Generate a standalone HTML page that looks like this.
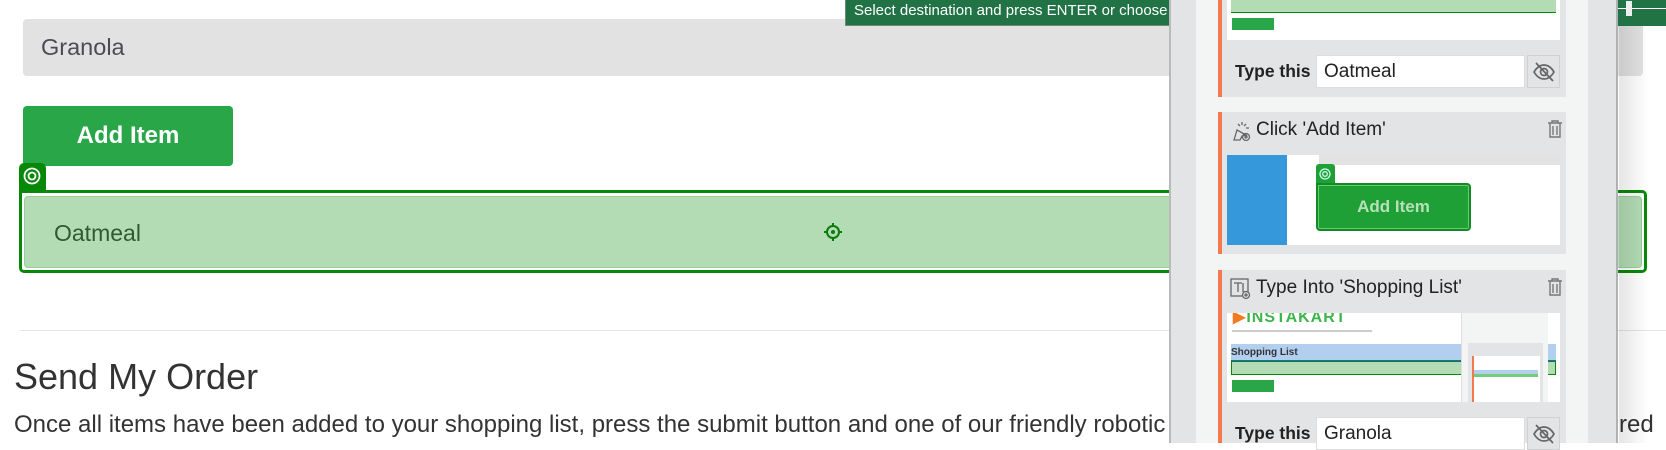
<!DOCTYPE html>
<html><head><meta charset="utf-8"><style>
*{margin:0;padding:0;box-sizing:border-box}
body{width:1666px;height:443px;overflow:hidden;background:#fff;font-family:"Liberation Sans",Arial,sans-serif;position:relative}
.a{position:absolute}
.ui{font-family:"Liberation Sans",Arial,sans-serif}
</style></head><body>
<!-- main page -->
<div class="a" style="left:23px;top:19px;width:1620px;height:57px;background:#e2e2e2;border-radius:4px"></div>
<div class="a" style="left:41px;top:34px;font-size:23.5px;color:#4b4b55">Granola</div>
<div class="a" style="left:23px;top:106px;width:210px;height:60px;background:#29a748;border-radius:4px;color:#fff;font-weight:bold;font-size:24px;line-height:60px;text-align:center">Add Item</div>
<div class="a" style="left:19px;top:163px;width:27px;height:30px;background:#088808;border-radius:5px 5px 0 0"></div>
<svg class="a" style="left:22px;top:166px" width="20" height="20" viewBox="0 0 20 20"><circle cx="10" cy="10" r="7.5" fill="none" stroke="#fff" stroke-width="1.8"/><circle cx="10" cy="10" r="3.5" fill="none" stroke="#fff" stroke-width="1.8"/></svg>
<div class="a" style="left:19px;top:190px;width:1628px;height:83px;border:3px solid #088808;border-radius:0 5px 5px 5px;background:#fff"></div>
<div class="a" style="left:24px;top:196px;width:1618px;height:72px;background:#b3dcb4;border:1px solid #9ccb9d;border-radius:4px"></div>
<div class="a" style="left:54px;top:220px;font-size:23px;color:#2f5a2f">Oatmeal</div>
<svg class="a" style="left:823px;top:222px" width="20" height="20" viewBox="0 0 20 20"><circle cx="10" cy="10" r="6" fill="none" stroke="#0a7a0a" stroke-width="2"/><circle cx="10" cy="10" r="2" fill="#0a7a0a"/><path d="M10 1v4M10 15v4M1 10h3M16 10h3" stroke="#0a7a0a" stroke-width="2"/></svg>
<div class="a" style="left:20px;top:330px;width:1646px;height:1px;background:#e5e5e5"></div>
<div class="a" style="left:14px;top:356px;font-size:36px;color:#333">Send My Order</div>
<div class="a" style="left:14px;top:411px;font-size:24px;color:#333;white-space:nowrap">Once all items have been added to your shopping list, press the submit button and one of our friendly robotic</div>
<div class="a" style="left:1619px;top:411px;font-size:24px;color:#333">red</div>
<!-- banner -->
<div class="a ui" style="left:845px;top:0;width:330px;height:26px;background:#217346;border:1px solid #6a8a75;border-top:none;color:#fff;font-size:15px;line-height:22px;padding-left:8px;white-space:nowrap;overflow:hidden">Select destination and press ENTER or choose</div>
<div class="a" style="left:1618px;top:0;width:48px;height:26px;background:#217346"></div>
<div class="a" style="left:1618px;top:8px;width:48px;height:1px;background:#fff"></div>
<div class="a" style="left:1626px;top:1px;width:6px;height:15px;background:#eee"></div>
<div class="a" style="left:1619px;top:26px;width:30px;height:417px;background:linear-gradient(90deg,rgba(0,0,0,.1),rgba(0,0,0,0))"></div>
<!-- panel -->
<div class="a" style="left:1169px;top:0;width:449px;height:443px;background:#e3e4e5;border-left:2px solid #b9babb;border-right:2px solid #b0b1b2"></div>
<div class="a" style="left:1196px;top:0;width:392px;height:443px;background:#f3f4f4"></div>

<!-- card 1 -->
<div class="a" style="left:1218px;top:0;width:348px;height:97px;background:#e3e4e5;border-left:4px solid #f47a4e"></div>
<div class="a" style="left:1227px;top:0;width:333px;height:40px;background:#fff"></div>
<div class="a" style="left:1231px;top:0;width:325px;height:13px;background:#b3dcb4;border-bottom:1px solid #088808"></div>
<div class="a" style="left:1232px;top:18px;width:42px;height:12px;background:#29a748"></div>
<div class="a ui" style="left:1235px;top:55px;font-size:17.5px;font-weight:bold;color:#222;line-height:33px">Type this</div>
<div class="a ui" style="left:1316px;top:55px;width:209px;height:33px;background:#fff;border:1px solid #ddd;font-size:19px;line-height:31px;padding-left:7px;color:#222">Oatmeal</div>
<div class="a" style="left:1527px;top:55px;width:33px;height:33px;background:#e3e4e5;border:1px solid #d0d1d2"></div>
<svg class="a" style="left:1532px;top:60px" width="24" height="24" viewBox="0 0 24 24"><path d="M2 12c3-5 6-7 10-7s7 2 10 7c-3 5-6 7-10 7s-7-2-10-7z" fill="none" stroke="#666" stroke-width="1.7"/><circle cx="12" cy="12" r="3.5" fill="none" stroke="#666" stroke-width="1.7"/><path d="M4 3l17 18" stroke="#666" stroke-width="1.7"/></svg>

<!-- card 2 -->
<div class="a" style="left:1218px;top:112px;width:348px;height:142px;background:#e3e4e5;border-left:4px solid #f47a4e"></div>
<svg class="a" style="left:1230px;top:120px" width="22" height="22" viewBox="0 0 22 22" fill="none" stroke="#666" stroke-width="1.3"><path d="M4 20l3-10 9 5-4 1-2 4z"/><path d="M12 2v3M16 4l-2 2M19 8h-3M8 4l2 2"/><circle cx="16" cy="17" r="3.5"/><circle cx="16" cy="17" r="1"/></svg>
<div class="a ui" style="left:1256px;top:119px;font-size:19px;color:#222">Click 'Add Item'</div>
<svg class="a" style="left:1547px;top:120px" width="16" height="18" viewBox="0 0 16 18" fill="none" stroke="#777" stroke-width="1.4"><path d="M1 3h14M5 3V1h6v2M3 3v14h10V3M6 6v9M10 6v9"/></svg>
<div class="a" style="left:1227px;top:155px;width:333px;height:90px;background:#fff"></div>
<div class="a" style="left:1319px;top:155px;width:241px;height:10px;background:#e2e2e2"></div>
<div class="a" style="left:1227px;top:155px;width:60px;height:90px;background:#3498db"></div>
<div class="a" style="left:1316px;top:164px;width:19px;height:20px;background:#1fa037;border-radius:3px 3px 0 0"></div>
<svg class="a" style="left:1318px;top:167px" width="14" height="14" viewBox="0 0 14 14"><circle cx="7" cy="7" r="5" fill="none" stroke="#cfe" stroke-width="1.3"/><circle cx="7" cy="7" r="2.3" fill="none" stroke="#cfe" stroke-width="1.3"/></svg>
<div class="a" style="left:1316px;top:183px;width:155px;height:48px;background:#1fa037;border:2px solid #138a28;border-radius:0 4px 4px 4px;box-shadow:inset 0 0 0 1px #6c6"></div>
<div class="a" style="left:1316px;top:183px;width:155px;height:48px;color:#b8e0b8;font-weight:bold;font-size:17px;line-height:48px;text-align:center">Add Item</div>

<!-- card 3 -->
<div class="a" style="left:1218px;top:270px;width:348px;height:173px;background:#e3e4e5;border-left:4px solid #f47a4e"></div>
<svg class="a" style="left:1230px;top:278px" width="22" height="22" viewBox="0 0 22 22" fill="none" stroke="#666" stroke-width="1.3"><rect x="1" y="1" width="17" height="17"/><path d="M4 5h8M8 5v9M13 5v9"/><circle cx="16" cy="17" r="3.5" fill="#e3e4e5"/><circle cx="16" cy="17" r="1"/></svg>
<div class="a ui" style="left:1256px;top:277px;font-size:19px;color:#222">Type Into 'Shopping List'</div>
<svg class="a" style="left:1547px;top:278px" width="16" height="18" viewBox="0 0 16 18" fill="none" stroke="#777" stroke-width="1.4"><path d="M1 3h14M5 3V1h6v2M3 3v14h10V3M6 6v9M10 6v9"/></svg>
<div class="a" style="left:1227px;top:313px;width:333px;height:89px;background:#fff;overflow:hidden">
 <div class="a" style="left:6px;top:-6px;font-size:16px;font-weight:bold;color:#3cb54a;letter-spacing:1px"><span style="color:#f47a20">▶</span>INSTAKART</div>
 <div class="a" style="left:5px;top:17px;width:140px;height:2px;background:#ccc"></div>
 <div class="a" style="left:4px;top:31px;width:325px;height:17px;background:#b3cff0;border-bottom:1px solid #2266cc;font-size:10px;font-weight:bold;color:#333;line-height:17px">Shopping List</div>
 <div class="a" style="left:4px;top:48px;width:325px;height:14px;background:#b3dcb4;border:1px solid #088808"></div>
 <div class="a" style="left:5px;top:67px;width:42px;height:12px;background:#29a748"></div>
 <div class="a" style="left:234px;top:0;width:87px;height:89px;background:#f3f4f4;border-left:1px solid #ddd"></div>
 <div class="a" style="left:241px;top:30px;width:75px;height:59px;background:#e3e4e5"></div>
 <div class="a" style="left:245px;top:43px;width:68px;height:46px;background:#fff;border-left:2px solid #f47a4e"></div>
 <div class="a" style="left:247px;top:57px;width:64px;height:4px;background:#b3cff0"></div>
 <div class="a" style="left:247px;top:61px;width:64px;height:3px;background:#7c7"></div>
</div>
<div class="a ui" style="left:1235px;top:417px;font-size:17.5px;font-weight:bold;color:#222;line-height:33px">Type this</div>
<div class="a ui" style="left:1316px;top:417px;width:209px;height:33px;background:#fff;border:1px solid #ddd;font-size:19px;line-height:31px;padding-left:7px;color:#222">Granola</div>
<div class="a" style="left:1527px;top:417px;width:33px;height:33px;background:#e3e4e5;border:1px solid #d0d1d2"></div>
<svg class="a" style="left:1532px;top:422px" width="24" height="24" viewBox="0 0 24 24"><path d="M2 12c3-5 6-7 10-7s7 2 10 7c-3 5-6 7-10 7s-7-2-10-7z" fill="none" stroke="#666" stroke-width="1.7"/><circle cx="12" cy="12" r="3.5" fill="none" stroke="#666" stroke-width="1.7"/><path d="M4 3l17 18" stroke="#666" stroke-width="1.7"/></svg>
</body></html>
